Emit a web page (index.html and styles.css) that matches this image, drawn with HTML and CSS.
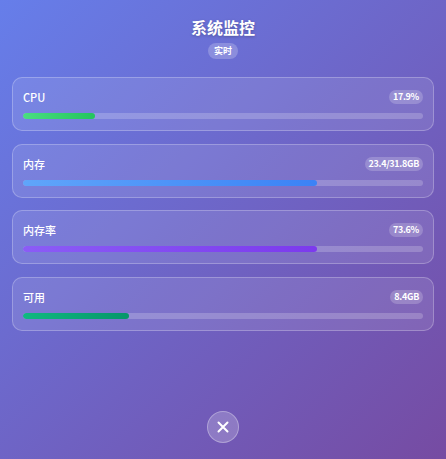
FILE: index.html
```html
<!DOCTYPE html>
<html lang="zh">
<head>
<meta charset="utf-8">
<title>系统监控</title>
<link rel="stylesheet" href="styles.css">
</head>
<body>
<div class="app">
  <header class="head">
    <h1 class="title">系统监控</h1>
    <span class="live">实时</span>
  </header>
  <main class="list">
    <section class="card">
      <div class="row"><span class="label">CPU</span><span class="value">17.9%</span></div>
      <div class="track"><div class="fill fill-cpu" style="width:17.9%"></div></div>
    </section>
    <section class="card">
      <div class="row"><span class="label">内存</span><span class="value">23.4/31.8GB</span></div>
      <div class="track"><div class="fill fill-mem" style="width:73.6%"></div></div>
    </section>
    <section class="card">
      <div class="row"><span class="label">内存率</span><span class="value">73.6%</span></div>
      <div class="track"><div class="fill fill-rate" style="width:73.6%"></div></div>
    </section>
    <section class="card">
      <div class="row"><span class="label">可用</span><span class="value">8.4GB</span></div>
      <div class="track"><div class="fill fill-free" style="width:26.4%"></div></div>
    </section>
  </main>
  <footer class="foot">
    <button class="close" aria-label="关闭">
      <svg width="14" height="14" viewBox="0 0 14 14"><path d="M2.5 2.5 L11.5 11.5 M11.5 2.5 L2.5 11.5" stroke="#fff" stroke-width="2" stroke-linecap="round" fill="none"/></svg>
    </button>
  </footer>
</div>
</body>
</html>
```
FILE: styles.css
```css
* { box-sizing: border-box; }
html, body { margin: 0; height: 100%; }
body {
  font-family: "Noto Sans CJK SC", "Noto Sans", sans-serif;
  background: linear-gradient(135deg, #667eea 0%, #764ba2 100%);
  color: #fff;
}
.app {
  min-height: 100vh;
  display: flex;
  flex-direction: column;
  padding: 16px 12px 16px;
}
.head {
  display: flex;
  flex-direction: column;
  align-items: center;
}
.title {
  margin: 0;
  font-size: 16px;
  line-height: 22px;
  font-weight: 700;
  text-shadow: 0 1px 3px rgba(0,0,0,0.25);
}
.live {
  margin-top: 5px;
  font-size: 9px;
  line-height: 16px;
  height: 16px;
  font-weight: 600;
  padding: 0 6px;
  border-radius: 8px;
  background: rgba(255,255,255,0.22);
}
.list {
  margin-top: 18px;
  display: flex;
  flex-direction: column;
  gap: 12.7px;
}
.card {
  border: 1px solid rgba(255,255,255,0.25);
  background: rgba(255,255,255,0.1);
  border-radius: 10px;
  padding: 10px 10px 11px;
}
.row {
  display: flex;
  justify-content: space-between;
  align-items: center;
  height: 18px;
}
.label {
  font-size: 11px;
  line-height: 16px;
  font-weight: 500;
}
.value {
  font-size: 9px;
  font-weight: 700;
  line-height: 14px;
  height: 14px;
  padding: 0 4px;
  letter-spacing: -0.3px;
  border-radius: 7px;
  background: rgba(255,255,255,0.2);
}
.track {
  margin-top: 7px;
  height: 6px;
  border-radius: 3px;
  background: rgba(255,255,255,0.2);
  overflow: hidden;
}
.fill { height: 100%; border-radius: 3px; }
.fill-cpu { background: linear-gradient(90deg, #4ade80, #22c55e); }
.fill-mem { background: linear-gradient(90deg, #60a5fa, #3b82f6); }
.fill-rate { background: linear-gradient(90deg, #8b5cf6, #7c3aed); }
.fill-free { background: linear-gradient(90deg, #10b981, #059669); }
.foot {
  margin-top: auto;
  display: flex;
  justify-content: center;
}
.close {
  width: 32px;
  height: 32px;
  border-radius: 50%;
  border: 1px solid rgba(255,255,255,0.3);
  background: rgba(255,255,255,0.2);
  display: flex;
  align-items: center;
  justify-content: center;
  padding: 0;
  cursor: pointer;
}
```
